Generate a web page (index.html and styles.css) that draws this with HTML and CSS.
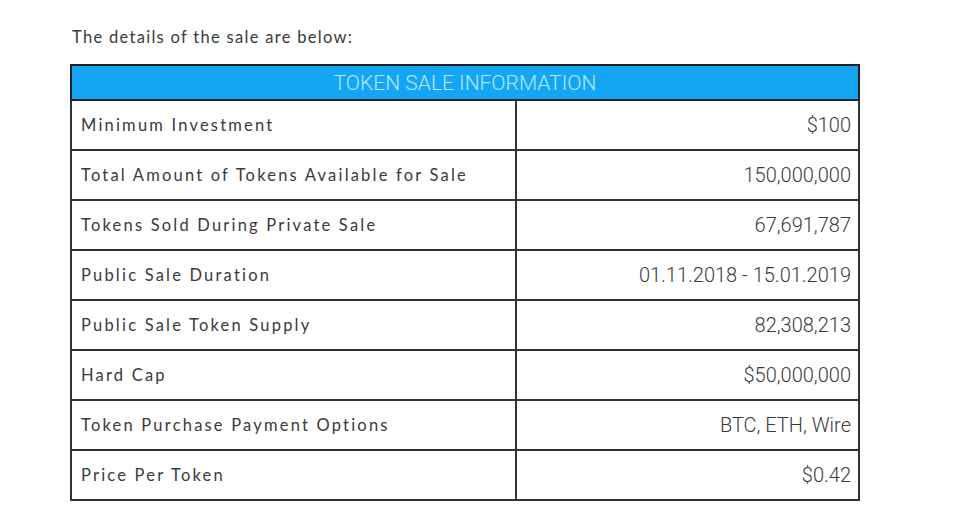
FILE: index.html
```html
<!DOCTYPE html>
<html>
<head>
<meta charset="utf-8">
<link rel="stylesheet" href="styles.css">
</head>
<body>
<div class="page">
  <p class="intro">The details of the sale are below:</p>
  <table class="sale">
    <thead>
      <tr><th colspan="2">TOKEN SALE INFORMATION</th></tr>
    </thead>
    <tbody>
      <tr><td class="label">Minimum Investment</td><td class="value">$100</td></tr>
      <tr><td class="label">Total Amount of Tokens Available for Sale</td><td class="value">150,000,000</td></tr>
      <tr><td class="label">Tokens Sold During Private Sale</td><td class="value">67,691,787</td></tr>
      <tr><td class="label">Public Sale Duration</td><td class="value">01.11.2018 - 15.01.2019</td></tr>
      <tr><td class="label">Public Sale Token Supply</td><td class="value">82,308,213</td></tr>
      <tr><td class="label">Hard Cap</td><td class="value">$50,000,000</td></tr>
      <tr><td class="label">Token Purchase Payment Options</td><td class="value">BTC, ETH, Wire</td></tr>
      <tr><td class="label">Price Per Token</td><td class="value">$0.42</td></tr>
    </tbody>
  </table>
</div>
</body>
</html>
```
FILE: styles.css
```css
html, body {
  margin: 0;
  padding: 0;
  background: #ffffff;
}
.page {
  padding: 25px 0 0 70px;
  font-family: "DejaVu Sans", sans-serif;
  color: #333;
}
.intro {
  margin: 1px 0 16px 2px;
  font-family: "Lato", sans-serif;
  font-weight: 400;
  font-size: 16.5px;
  letter-spacing: 1.3px;
  line-height: 22px;
  color: #3a3a3a;
}
.sale {
  border-collapse: collapse;
  width: 790px;
  border: 2px solid #222;
}
.sale th {
  background: #14a6f4;
  color: #b0eaff;
  font-family: "Roboto", sans-serif;
  font-weight: 300;
  font-size: 21px;
  height: 33px;
  padding: 0;
  border-bottom: 2px solid #223;
  text-align: center;
}
.sale td {
  height: 48px;
  padding: 0;
  border: 2px solid #333;
}
.label {
  width: 434px;
  padding-left: 9px !important;
  font-family: "Lato", sans-serif;
  font-weight: 400;
  font-size: 16.5px;
  letter-spacing: 2.2px;
  color: #3a3a3a;
}
.value {
  text-align: right;
  padding-right: 7px !important;
  font-family: "Roboto", sans-serif;
  font-weight: 300;
  font-size: 20px;
  color: #3a3a3a;
}
```
